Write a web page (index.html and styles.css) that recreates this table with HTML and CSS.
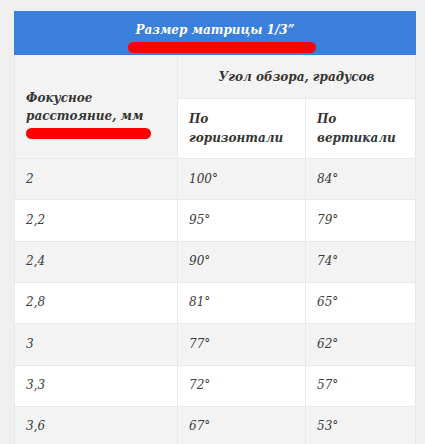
FILE: index.html
```html
<!DOCTYPE html>
<html lang="ru">
<head>
<meta charset="utf-8">
<title>Размер матрицы 1/3"</title>
<link rel="stylesheet" href="styles.css">
</head>
<body>
<div class="page">
<table class="spec">
  <colgroup>
    <col class="c1"><col class="c2"><col class="c3">
  </colgroup>
  <thead>
    <tr>
      <th colspan="3" class="title">Размер матрицы 1/3”<span class="mark mark-title"></span></th>
    </tr>
    <tr>
      <th rowspan="2" class="focal"><span class="focal-text">Фокусное<br>расстояние, мм</span><span class="mark mark-focal"></span></th>
      <th colspan="2" class="angle">Угол обзора, градусов</th>
    </tr>
    <tr>
      <th class="sub">По<br>горизонтали</th>
      <th class="sub">По<br>вертикали</th>
    </tr>
  </thead>
  <tbody>
    <tr class="odd"><td>2</td><td>100°</td><td>84°</td></tr>
    <tr><td>2,2</td><td>95°</td><td>79°</td></tr>
    <tr class="odd"><td>2,4</td><td>90°</td><td>74°</td></tr>
    <tr><td>2,8</td><td>81°</td><td>65°</td></tr>
    <tr class="odd"><td>3</td><td>77°</td><td>62°</td></tr>
    <tr><td>3,3</td><td>72°</td><td>57°</td></tr>
    <tr class="odd"><td>3,6</td><td>67°</td><td>53°</td></tr>
  </tbody>
</table>
</div>
</body>
</html>
```
FILE: styles.css
```css
html, body {
  margin: 0;
  padding: 0;
  background: #efefef;
}
.page {
  padding: 11px 10px 0 14px;
  height: 444px;
  overflow: hidden;
  box-sizing: border-box;
}
.spec {
  width: 401px;
  border-collapse: collapse;
  table-layout: fixed;
  font-family: "DejaVu Serif", "Liberation Serif", serif;
  font-style: italic;
  font-size: 12px;
  color: #3a3a3a;
}
.c1 { width: 163px; }
.c2 { width: 128px; }
.c3 { width: 110px; }
.spec th, .spec td {
  border: 1px solid #e8e8e8;
  text-align: left;
  vertical-align: middle;
  padding: 10.5px 11px;
  line-height: 19.33px;
}
.spec th {
  font-weight: bold;
  color: #353535;
}
.spec th.title {
  position: relative;
  background: #3b7fdd;
  border-color: #3b7fdd;
  color: #ffffff;
  text-align: center;
  padding: 7px 11px 13px;
  line-height: 22px;
}
.mark {
  position: absolute;
  display: block;
  height: 11px;
  border-radius: 6px;
  background: #ff0000;
}
.mark-title {
  left: 113px;
  top: 30px;
  width: 188px;
}
.spec th.focal {
  position: relative;
  background: #f3f3f3;
  padding-left: 11px;
  line-height: 18px;
}
.mark-focal {
  left: 11px;
  top: 73px;
  width: 125px;
}
.spec th.angle {
  background: #f3f3f3;
  text-align: center;
  line-height: 22px;
}
.spec th.sub {
  background: #ffffff;
  line-height: 19px;
}
.spec td {
  background: #ffffff;
}
.spec tr.odd td {
  background: #f3f3f3;
}
```
